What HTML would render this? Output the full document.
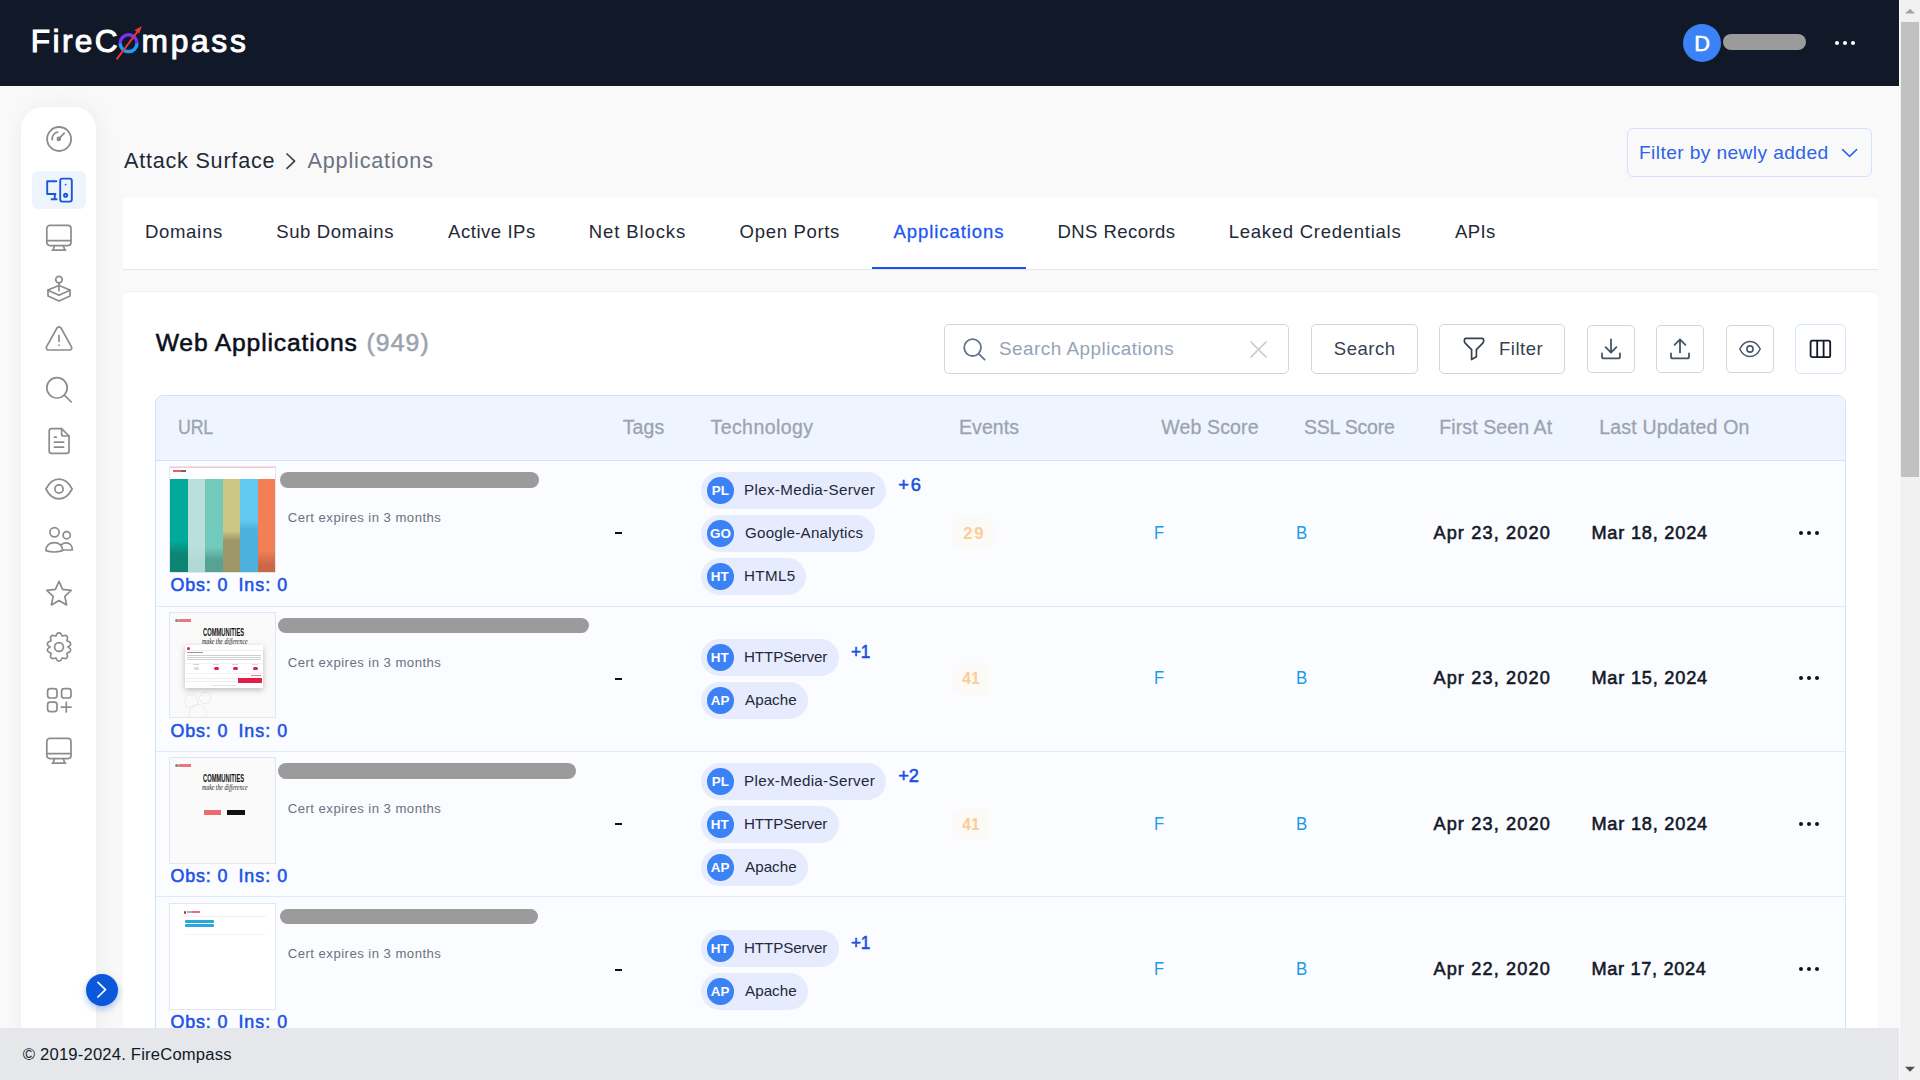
<!DOCTYPE html>
<html><head><meta charset="utf-8"><title>FireCompass - Applications</title>
<style>
html,body{margin:0;padding:0;width:1920px;height:1080px;overflow:hidden;background:#f9f9f9;font-family:"Liberation Sans", sans-serif;}
*{box-sizing:border-box;}
</style></head><body>
<div style="position:absolute;left:0px;top:0px;width:1899px;height:86px;background:#111827"></div>
<svg style="position:absolute;left:110px;top:20px;" width="40" height="45" viewBox="0 0 40 45" fill="none">
<path d="M10.2 23.2 A8.4 8.4 0 0 1 27 23.2" stroke="#7b2ff2" stroke-width="3.5"/>
<path d="M27 23.2 A8.4 8.4 0 0 1 10.2 23.2" stroke="#1e9bff" stroke-width="3.5"/>
<line x1="6.6" y1="39.3" x2="29.5" y2="9" stroke="#e53935" stroke-width="2"/>
<path d="M31.8 6 L24.5 10.2 L29.2 13.6 Z" fill="#e53935"/>
</svg>
<div style="position:absolute;left:1683px;top:24px;width:38px;height:38px;background:#3b82f6;border-radius:50%"></div>
<div style="position:absolute;left:1723px;top:34px;width:83px;height:16px;background:#9b9b9b;border-radius:8px"></div>
<div style="position:absolute;left:1835.25px;top:41px;width:4.1px;height:4.1px;background:#fff;border-radius:50%"></div>
<div style="position:absolute;left:1843.15px;top:41px;width:4.1px;height:4.1px;background:#fff;border-radius:50%"></div>
<div style="position:absolute;left:1850.8500000000001px;top:41px;width:4.1px;height:4.1px;background:#fff;border-radius:50%"></div>
<div style="position:absolute;left:21px;top:107px;width:75px;height:1000px;background:#fff;border-radius:22px 22px 0 0;box-shadow:2px 0 22px rgba(0,0,0,0.055)"></div>
<div style="position:absolute;left:32px;top:171px;width:54px;height:38px;background:#eef4fe;border-radius:6px"></div>
<svg style="position:absolute;left:44px;top:124px;" width="30" height="30" viewBox="0 0 30 30" fill="none"><g stroke="#8c8c8c" stroke-width="1.8" stroke-linecap="round" stroke-linejoin="round"><circle cx="15.1" cy="15" r="12"/><path d="M8.2 15.6 A7 7 0 0 1 13.6 8.2"/><path d="M14.8 14.9 L20.2 9.2"/><circle cx="14.8" cy="14.9" r="1.4" fill="#8c8c8c"/></g></svg>
<svg style="position:absolute;left:44px;top:176px;" width="30" height="28" viewBox="0 0 30 28" fill="none"><g stroke="#1a56db" stroke-width="1.9" stroke-linecap="round" stroke-linejoin="round"><path d="M12.3 5.2 H3.2 V18 H11.5"/><path d="M10.8 18 V23.3 M7.6 23.3 H12.6"/><rect x="16.2" y="2.6" width="11.6" height="23" rx="2"/><circle cx="21.6" cy="8.6" r="0.9" fill="#1a56db" stroke="none"/><circle cx="21.6" cy="19.3" r="1.6"/></g></svg>
<svg style="position:absolute;left:44px;top:223px;" width="30" height="30" viewBox="0 0 30 30" fill="none"><g stroke="#8c8c8c" stroke-width="1.7" stroke-linecap="round" stroke-linejoin="round"><rect x="2.8" y="2.4" width="24.2" height="20.2" rx="3"/><path d="M2.8 17.6 H27"/><path d="M10.5 22.6 L9 27.2 M19.3 22.6 L20.8 27.2 M8.3 27.2 H21.6"/></g></svg>
<svg style="position:absolute;left:44px;top:274px;" width="30" height="30" viewBox="0 0 30 30" fill="none"><g stroke="#8c8c8c" stroke-width="1.7" stroke-linecap="round" stroke-linejoin="round"><circle cx="15" cy="5.6" r="3.3"/><path d="M15 8.9 V16.6"/><path d="M15 11.5 L4 16 V22 L15 27 L26 22 V16 L15 11.5"/><path d="M4 16 L15 21 L26 16 M15 21 V27" stroke-width="0"/><path d="M4 16.2 L15 21.2 L26 16.2"/></g></svg>
<svg style="position:absolute;left:44px;top:324px;" width="30" height="30" viewBox="0 0 30 30" fill="none"><g stroke="#8c8c8c" stroke-width="1.7" stroke-linecap="round" stroke-linejoin="round"><path d="M13 4 L2.6 22.6 C1.8 24.2 2.6 26 4.4 26 H25.6 C27.4 26 28.2 24.2 27.4 22.6 L17 4 C16.1 2.4 13.9 2.4 13 4 Z"/><path d="M15 11.4 V17.3"/><path d="M15 21 V21.2"/></g></svg>
<svg style="position:absolute;left:44px;top:374px;" width="30" height="30" viewBox="0 0 30 30" fill="none"><g stroke="#8c8c8c" stroke-width="1.7" stroke-linecap="round" stroke-linejoin="round"><circle cx="13" cy="13.8" r="10.2"/><path d="M20.6 21.4 L27.3 28"/></g></svg>
<svg style="position:absolute;left:44px;top:426px;" width="30" height="30" viewBox="0 0 30 30" fill="none"><g stroke="#8c8c8c" stroke-width="1.7" stroke-linecap="round" stroke-linejoin="round"><path d="M7.6 2.6 H17.6 L25 10 V25 C25 26.4 24 27.4 22.6 27.4 H7.6 C6.2 27.4 5.2 26.4 5.2 25 V5 C5.2 3.6 6.2 2.6 7.6 2.6 Z"/><path d="M17.6 2.6 V8 C17.6 9.2 18.6 10 19.6 10 H25"/><path d="M10.4 11.2 H12.2 M10.4 16.2 H19.6 M10.4 21.2 H19.6"/></g></svg>
<svg style="position:absolute;left:44px;top:474px;" width="30" height="30" viewBox="0 0 30 30" fill="none"><g stroke="#8c8c8c" stroke-width="1.7" stroke-linecap="round" stroke-linejoin="round"><path d="M1.9 15 C5.2 8.6 9.6 5.1 15 5.1 C20.4 5.1 24.8 8.6 28.1 15 C24.8 21.4 20.4 24.9 15 24.9 C9.6 24.9 5.2 21.4 1.9 15 Z"/><circle cx="15" cy="15" r="4.1"/></g></svg>
<svg style="position:absolute;left:44px;top:524px;" width="30" height="30" viewBox="0 0 30 30" fill="none"><g stroke="#8c8c8c" stroke-width="1.7" stroke-linecap="round" stroke-linejoin="round"><circle cx="10.5" cy="8.3" r="4.6"/><circle cx="22.7" cy="11.2" r="3.6"/><path d="M1.9 26.6 C1.9 21.6 5.6 18.6 10.3 18.6 C15 18.6 18.6 21.6 18.6 26.6 C13 28.4 7.2 28.4 1.9 26.6 Z"/><path d="M17.6 20.6 C18.9 19.4 20.6 18.9 22.3 18.9 C25.8 18.9 28.3 21.6 28.3 26 H18.6"/></g></svg>
<svg style="position:absolute;left:44px;top:578px;" width="30" height="30" viewBox="0 0 30 30" fill="none"><g stroke="#8c8c8c" stroke-width="1.7" stroke-linecap="round" stroke-linejoin="round"><path d="M15 3.4 L18.6 11.4 L27.2 12.4 L20.8 18.3 L22.6 26.9 L15 22.5 L7.4 26.9 L9.2 18.3 L2.8 12.4 L11.4 11.4 Z"/></g></svg>
<svg style="position:absolute;left:44px;top:632px;" width="30" height="30" viewBox="0 0 30 30" fill="none"><g transform="translate(15 15) scale(1.13) translate(-15 -15)" stroke="#8c8c8c" stroke-width="1.5" stroke-linecap="round" stroke-linejoin="round"><path d="M13.2 3.4 C14 2.2 16 2.2 16.8 3.4 L17.8 5.3 L20 4.8 C21.4 4.5 22.8 5.8 22.5 7.2 L22 9.4 L24.3 10.6 C25.6 11.3 25.6 13.3 24.4 14 L22.9 15 L24.4 16 C25.6 16.8 25.6 18.7 24.3 19.4 L22 20.6 L22.5 22.8 C22.8 24.2 21.4 25.5 20 25.2 L17.8 24.7 L16.8 26.6 C16 27.8 14 27.8 13.2 26.6 L12.2 24.7 L10 25.2 C8.6 25.5 7.2 24.2 7.5 22.8 L8 20.6 L5.7 19.4 C4.4 18.7 4.4 16.8 5.6 16 L7.1 15 L5.6 14 C4.4 13.3 4.4 11.3 5.7 10.6 L8 9.4 L7.5 7.2 C7.2 5.8 8.6 4.5 10 4.8 L12.2 5.3 Z"/><circle cx="15" cy="15" r="3.9"/></g></svg>
<svg style="position:absolute;left:44px;top:685px;" width="30" height="30" viewBox="0 0 30 30" fill="none"><g stroke="#8c8c8c" stroke-width="1.7" stroke-linecap="round" stroke-linejoin="round"><rect x="3.6" y="3.6" width="9.4" height="9.4" rx="2.6"/><rect x="17.6" y="3.6" width="9.4" height="9.4" rx="2.6"/><rect x="3.6" y="17.2" width="9.4" height="9.4" rx="2.6"/><path d="M22.3 17.4 V27 M17.4 22.2 H27"/></g></svg>
<svg style="position:absolute;left:44px;top:736px;" width="30" height="30" viewBox="0 0 30 30" fill="none"><g stroke="#8c8c8c" stroke-width="1.7" stroke-linecap="round" stroke-linejoin="round"><rect x="2.8" y="2.4" width="24.2" height="20.2" rx="3"/><path d="M2.8 17.6 H27"/><path d="M10.5 22.6 L9 27.2 M19.3 22.6 L20.8 27.2 M8.3 27.2 H21.6"/></g></svg>
<div style="position:absolute;left:86px;top:974px;width:32px;height:32px;background:#0b58db;border-radius:50%;box-shadow:0 3px 7px rgba(11,87,208,0.35)"></div>
<svg style="position:absolute;left:86px;top:974px;" width="32" height="32" viewBox="0 0 32 32" fill="none"><path d="M11.9 8.3 L19.5 15.7 L11.9 23" stroke="#fff" stroke-width="1.7" stroke-linecap="round" stroke-linejoin="round"/></svg>
<svg style="position:absolute;left:282px;top:150px;" width="18" height="22" viewBox="0 0 18 22" fill="none"><path d="M5 4 L12.6 11.2 L5 18.4" stroke="#374151" stroke-width="1.7" stroke-linecap="round" stroke-linejoin="round"/></svg>
<div style="position:absolute;left:1627px;top:128px;width:245px;height:49px;border:1px solid #d3e3fd;border-radius:6px;background:transparent"></div>
<svg style="position:absolute;left:1838px;top:144px;" width="24" height="18" viewBox="0 0 24 18" fill="none"><path d="M4.6 5.6 L11.6 12.4 L18.6 5.6" stroke="#2f64e8" stroke-width="1.5" stroke-linecap="round" stroke-linejoin="round"/></svg>
<div style="position:absolute;left:123px;top:198px;width:1755px;height:72px;background:#fff;border-bottom:1px solid #e5e7eb"></div>
<div style="position:absolute;left:872px;top:267px;width:154px;height:2px;background:#1654f0"></div>
<div style="position:absolute;left:123px;top:292px;width:1755px;height:820px;background:#fff;border-radius:6px;box-shadow:0 -1px 0 #f1f1f3"></div>
<div style="position:absolute;left:944px;top:324px;width:345px;height:50px;border:1px solid #d1d5db;border-radius:5px;background:#fff"></div>
<svg style="position:absolute;left:960px;top:335px;" width="30" height="30" viewBox="0 0 30 30" fill="none"><circle cx="12.6" cy="12.6" r="8.4" stroke="#64748b" stroke-width="1.8"/><path d="M18.8 18.8 L24.6 24.6" stroke="#64748b" stroke-width="1.8" stroke-linecap="round"/></svg>
<svg style="position:absolute;left:1248px;top:339px;" width="21" height="21" viewBox="0 0 21 21" fill="none"><path d="M3 3 L18 18 M18 3 L3 18" stroke="#c8c8c8" stroke-width="1.6" stroke-linecap="round"/></svg>
<div style="position:absolute;left:1311px;top:324px;width:107px;height:50px;border:1px solid #d1d5db;border-radius:5px;background:#fff"></div>
<div style="position:absolute;left:1439px;top:324px;width:126px;height:50px;border:1px solid #d1d5db;border-radius:5px;background:#fff"></div>
<svg style="position:absolute;left:1460px;top:335px;" width="28" height="28" viewBox="0 0 28 28" fill="none"><path d="M4.4 4.8 C4.4 3.9 5.2 3.4 6 3.4 H22 C22.8 3.4 23.6 3.9 23.6 4.8 V6.3 C23.6 7 23.3 7.6 22.8 8.1 L16.4 14.6 V21.8 L11.6 24.6 V14.6 L5.2 8.1 C4.7 7.6 4.4 7 4.4 6.3 Z" stroke="#374151" stroke-width="1.7" stroke-linejoin="round"/></svg>
<div style="position:absolute;left:1587px;top:325px;width:48px;height:48px;border:1px solid #d1d5db;border-radius:5px;background:#fff"></div>
<div style="position:absolute;left:1656px;top:325px;width:48px;height:48px;border:1px solid #d1d5db;border-radius:5px;background:#fff"></div>
<div style="position:absolute;left:1726px;top:325px;width:48px;height:48px;border:1px solid #d1d5db;border-radius:5px;background:#fff"></div>
<svg style="position:absolute;left:1599px;top:337px;" width="24" height="24" viewBox="0 0 24 24" fill="none"><path d="M12 2.4 V15.4 M6.6 10.2 L12 15.6 L17.4 10.2 M3 16.4 V19.4 C3 20.6 3.8 21.4 5 21.4 H19 C20.2 21.4 21 20.6 21 19.4 V16.4" stroke="#475569" stroke-width="1.8" stroke-linecap="round" stroke-linejoin="round"/></svg>
<svg style="position:absolute;left:1668px;top:337px;" width="24" height="24" viewBox="0 0 24 24" fill="none"><path d="M12 15.4 V2.6 M6.6 7.8 L12 2.4 L17.4 7.8 M3 16.4 V19.4 C3 20.6 3.8 21.4 5 21.4 H19 C20.2 21.4 21 20.6 21 19.4 V16.4" stroke="#475569" stroke-width="1.8" stroke-linecap="round" stroke-linejoin="round"/></svg>
<svg style="position:absolute;left:1738px;top:337px;" width="24" height="24" viewBox="0 0 24 24" fill="none"><path d="M1.8 12 C3.9 7.5 7.5 4.4 12 4.4 C16.5 4.4 20.1 7.5 22.2 12 C20.1 16.5 16.5 19.6 12 19.6 C7.5 19.6 3.9 16.5 1.8 12 Z" stroke="#475569" stroke-width="1.5"/><circle cx="12" cy="12" r="3.1" stroke="#475569" stroke-width="1.6"/></svg>
<div style="position:absolute;left:1795px;top:324px;width:51px;height:50px;border:1px solid #d6e6fd;border-radius:6px;background:#fff"></div>
<svg style="position:absolute;left:1808px;top:337px;" width="24" height="24" viewBox="0 0 24 24" fill="none"><rect x="2.6" y="3.6" width="19.6" height="16.6" rx="1.8" stroke="#111827" stroke-width="1.8"/><path d="M9.2 3.6 V20.2 M15.6 3.6 V20.2" stroke="#111827" stroke-width="1.8"/></svg>
<div style="position:absolute;left:155px;top:395px;width:1691px;height:720px;background:#fafcff;border:1px solid #cfe1fd;border-radius:8px 8px 0 0"></div>
<div style="position:absolute;left:156px;top:396px;width:1689px;height:64px;background:#eef5fe;border-radius:7px 7px 0 0"></div>
<div style="position:absolute;left:156px;top:460px;width:1689px;height:1px;background:#cfe1fd"></div>
<div style="position:absolute;left:156px;top:606px;width:1689px;height:1px;background:#dde9fd"></div>
<div style="position:absolute;left:156px;top:751px;width:1689px;height:1px;background:#dde9fd"></div>
<div style="position:absolute;left:156px;top:896px;width:1689px;height:1px;background:#dde9fd"></div>
<div style="position:absolute;left:169px;top:466.3px;width:107px;height:106.5px;background:#fff;border:1px solid #e3e6ee;overflow:hidden"><div style="position:absolute;left:0;top:0;width:105px;height:12px;background:#fff;border-top:1px solid #f7c6cc"><div style="position:absolute;left:2.5px;top:2.2px;width:8px;height:1.6px;background:#e8344a;opacity:.8"></div><div style="position:absolute;left:10.5px;top:2.2px;width:5px;height:1.6px;background:#444;opacity:.8"></div></div><div style="position:absolute;left:0.00px;top:12px;width:17.80px;height:93.5px;background:linear-gradient(180deg,#00a99a 0%,#00a99a 66%,#0c8575 80%,#0c8575 100%)"></div><div style="position:absolute;left:17.50px;top:12px;width:17.80px;height:93.5px;background:linear-gradient(180deg,#b9e0dd 0%,#b9e0dd 70%,#b0d8d4 90%,#b0d8d4 100%)"></div><div style="position:absolute;left:35.00px;top:12px;width:17.80px;height:93.5px;background:linear-gradient(180deg,#72cabd 0%,#72cabd 72%,#55a394 86%,#55a394 100%)"></div><div style="position:absolute;left:52.50px;top:12px;width:17.80px;height:93.5px;background:linear-gradient(180deg,#cdc786 0%,#cdc786 55%,#9c9668 66%,#9c9668 100%)"></div><div style="position:absolute;left:70.00px;top:12px;width:17.80px;height:93.5px;background:linear-gradient(180deg,#62c9f3 0%,#62c9f3 44%,#4eb0dc 54%,#4eb0dc 100%)"></div><div style="position:absolute;left:87.50px;top:12px;width:17.80px;height:93.5px;background:linear-gradient(180deg,#f37f56 0%,#f37f56 76%,#c96846 92%,#c96846 100%)"></div></div>
<div style="position:absolute;left:280px;top:472.0px;width:259px;height:15.5px;background:#9b9b9b;border-radius:8px"></div>
<div style="position:absolute;left:615px;top:532.0px;width:6.6px;height:2px;background:#111"></div>
<div style="position:absolute;left:701px;top:472.0px;width:185.04999999999995px;height:37px;background:#e6ebfd;border-radius:18.5px"></div>
<div style="position:absolute;left:707px;top:477.2px;width:26.5px;height:26.5px;background:#3b82f6;border-radius:50%"></div>
<div style="position:absolute;left:701px;top:515.0px;width:173.79999999999995px;height:37px;background:#e6ebfd;border-radius:18.5px"></div>
<div style="position:absolute;left:707px;top:520.2px;width:26.5px;height:26.5px;background:#3b82f6;border-radius:50%"></div>
<div style="position:absolute;left:701px;top:558.0px;width:105.0px;height:37px;background:#e6ebfd;border-radius:18.5px"></div>
<div style="position:absolute;left:707px;top:563.2px;width:26.5px;height:26.5px;background:#3b82f6;border-radius:50%"></div>
<div style="position:absolute;left:952.3px;top:517.5px;width:42px;height:31.5px;background:#fcfaf7;border-radius:9px"></div>
<div style="position:absolute;left:1798.8px;top:530.6999999999999px;width:4.2px;height:4.2px;background:#111;border-radius:50%"></div>
<div style="position:absolute;left:1806.95px;top:530.6999999999999px;width:4.2px;height:4.2px;background:#111;border-radius:50%"></div>
<div style="position:absolute;left:1815.1px;top:530.6999999999999px;width:4.2px;height:4.2px;background:#111;border-radius:50%"></div>
<div style="position:absolute;left:169px;top:611.8px;width:107px;height:106.5px;background:#fafafa;border:1px solid #e3e6ee;overflow:hidden"><div style="position:absolute;left:5px;top:6px;width:4px;height:3px;background:#555;border-radius:50%;opacity:.7"></div><div style="position:absolute;left:9px;top:6px;width:12px;height:3px;background:#e8485a;opacity:.75"></div><div style="position:absolute;left:32.5px;top:14.5px;width:43px;height:11px;overflow:visible"><span style="position:absolute;left:0;top:0;font-family:Liberation Sans;font-weight:700;font-size:11.8px;line-height:11px;color:#111;white-space:nowrap;transform-origin:0 0;transform:scaleX(0.49)">COMMUNITIES</span></div><div style="position:absolute;left:32px;top:25.5px;width:44px;height:7px"><span style="position:absolute;left:0;top:0;font-family:Liberation Serif;font-style:italic;font-size:7.5px;line-height:7px;color:#222;white-space:nowrap;transform-origin:0 0;transform:scaleX(0.78)">make the difference</span></div><div style="position:absolute;left:8px;top:76px;width:44px;height:30px;opacity:.35;background:radial-gradient(circle at 30% 40%,transparent 6px,#ccc 6.5px,transparent 7.5px),radial-gradient(circle at 62% 30%,transparent 5px,#ccc 5.5px,transparent 6.5px),radial-gradient(circle at 45% 80%,transparent 8px,#ccc 8.5px,transparent 9.5px)"></div><div style="position:absolute;left:15px;top:32px;width:78px;height:43px;background:#fff;box-shadow:0 2px 6px rgba(0,0,0,0.25)"><div style="position:absolute;left:2px;top:2px;width:3px;height:3px;background:#e11d48;border-radius:50%"></div><div style="position:absolute;left:0;top:5px;width:78px;height:1px;background:#f0f0f0"></div><div style="position:absolute;left:2px;top:7.5px;width:16px;height:1px;background:#999"></div><div style="position:absolute;left:2px;top:10px;width:74px;height:5px;background:repeating-linear-gradient(180deg,#aaa 0 1px,transparent 1px 2px);opacity:.55"></div><div style="position:absolute;left:0;top:18px;width:78px;height:1px;background:#f2f2f2"></div><div style="position:absolute;left:8.0px;top:19.5px;width:6px;height:1px;background:#bbb;opacity:.6"></div><div style="position:absolute;left:9.0px;top:22.5px;width:5px;height:3px;background:#ddd;border-radius:2px"></div><div style="position:absolute;left:27.5px;top:19.5px;width:6px;height:1px;background:#bbb;opacity:.6"></div><div style="position:absolute;left:28.5px;top:22.5px;width:5px;height:3px;background:#e11d48;border-radius:2px"></div><div style="position:absolute;left:47.0px;top:19.5px;width:6px;height:1px;background:#bbb;opacity:.6"></div><div style="position:absolute;left:48.0px;top:22.5px;width:5px;height:3px;background:#e11d48;border-radius:2px"></div><div style="position:absolute;left:66.5px;top:19.5px;width:6px;height:1px;background:#bbb;opacity:.6"></div><div style="position:absolute;left:67.5px;top:22.5px;width:5px;height:3px;background:#e11d48;border-radius:2px"></div><div style="position:absolute;left:0;top:28.5px;width:78px;height:1px;background:#f2f2f2"></div><div style="position:absolute;left:66px;top:30.5px;width:10px;height:1px;background:#e11d48;opacity:.6"></div><div style="position:absolute;left:1px;top:33.5px;width:25px;height:4px;border:1px solid #eee"></div><div style="position:absolute;left:27px;top:33.5px;width:25px;height:4px;border:1px solid #eee"></div><div style="position:absolute;left:53px;top:33.5px;width:24px;height:4.5px;background:#e11d48"></div><div style="position:absolute;left:27px;top:40px;width:24px;height:1px;background:#ccc;opacity:.6"></div></div></div>
<div style="position:absolute;left:278px;top:617.5px;width:311px;height:15.5px;background:#9b9b9b;border-radius:8px"></div>
<div style="position:absolute;left:615px;top:677.5px;width:6.6px;height:2px;background:#111"></div>
<div style="position:absolute;left:701px;top:639.0px;width:137.5999999999999px;height:37px;background:#e6ebfd;border-radius:18.5px"></div>
<div style="position:absolute;left:707px;top:644.2px;width:26.5px;height:26.5px;background:#3b82f6;border-radius:50%"></div>
<div style="position:absolute;left:701px;top:682.0px;width:106.5px;height:37px;background:#e6ebfd;border-radius:18.5px"></div>
<div style="position:absolute;left:707px;top:687.2px;width:26.5px;height:26.5px;background:#3b82f6;border-radius:50%"></div>
<div style="position:absolute;left:952.3px;top:663.0px;width:37.5px;height:31.5px;background:#fcfaf7;border-radius:9px"></div>
<div style="position:absolute;left:1798.8px;top:676.1999999999999px;width:4.2px;height:4.2px;background:#111;border-radius:50%"></div>
<div style="position:absolute;left:1806.95px;top:676.1999999999999px;width:4.2px;height:4.2px;background:#111;border-radius:50%"></div>
<div style="position:absolute;left:1815.1px;top:676.1999999999999px;width:4.2px;height:4.2px;background:#111;border-radius:50%"></div>
<div style="position:absolute;left:169px;top:757.3px;width:107px;height:106.5px;background:#fafafa;border:1px solid #e3e6ee;overflow:hidden"><div style="position:absolute;left:5px;top:6px;width:4px;height:3px;background:#555;border-radius:50%;opacity:.7"></div><div style="position:absolute;left:9px;top:6px;width:12px;height:3px;background:#e8485a;opacity:.75"></div><div style="position:absolute;left:32.5px;top:14.5px;width:43px;height:11px;overflow:visible"><span style="position:absolute;left:0;top:0;font-family:Liberation Sans;font-weight:700;font-size:11.8px;line-height:11px;color:#111;white-space:nowrap;transform-origin:0 0;transform:scaleX(0.49)">COMMUNITIES</span></div><div style="position:absolute;left:32px;top:25.5px;width:44px;height:7px"><span style="position:absolute;left:0;top:0;font-family:Liberation Serif;font-style:italic;font-size:7.5px;line-height:7px;color:#222;white-space:nowrap;transform-origin:0 0;transform:scaleX(0.78)">make the difference</span></div><div style="position:absolute;left:34px;top:52px;width:17px;height:5px;background:#ee6a72"></div><div style="position:absolute;left:57px;top:52px;width:18px;height:5px;background:#111"></div></div>
<div style="position:absolute;left:278px;top:763.0px;width:298px;height:15.5px;background:#9b9b9b;border-radius:8px"></div>
<div style="position:absolute;left:615px;top:823.0px;width:6.6px;height:2px;background:#111"></div>
<div style="position:absolute;left:701px;top:763.0px;width:185.04999999999995px;height:37px;background:#e6ebfd;border-radius:18.5px"></div>
<div style="position:absolute;left:707px;top:768.2px;width:26.5px;height:26.5px;background:#3b82f6;border-radius:50%"></div>
<div style="position:absolute;left:701px;top:806.0px;width:137.5999999999999px;height:37px;background:#e6ebfd;border-radius:18.5px"></div>
<div style="position:absolute;left:707px;top:811.2px;width:26.5px;height:26.5px;background:#3b82f6;border-radius:50%"></div>
<div style="position:absolute;left:701px;top:849.0px;width:106.5px;height:37px;background:#e6ebfd;border-radius:18.5px"></div>
<div style="position:absolute;left:707px;top:854.2px;width:26.5px;height:26.5px;background:#3b82f6;border-radius:50%"></div>
<div style="position:absolute;left:952.3px;top:808.5px;width:37.5px;height:31.5px;background:#fcfaf7;border-radius:9px"></div>
<div style="position:absolute;left:1798.8px;top:821.6999999999999px;width:4.2px;height:4.2px;background:#111;border-radius:50%"></div>
<div style="position:absolute;left:1806.95px;top:821.6999999999999px;width:4.2px;height:4.2px;background:#111;border-radius:50%"></div>
<div style="position:absolute;left:1815.1px;top:821.6999999999999px;width:4.2px;height:4.2px;background:#111;border-radius:50%"></div>
<div style="position:absolute;left:169px;top:903.3px;width:107px;height:106.5px;background:#fff;border:1px solid #e3e6ee;overflow:hidden"><div style="position:absolute;left:13.5px;top:6.8px;width:2.6px;height:2.6px;background:#b8283a;border-radius:50%"></div><div style="position:absolute;left:16.6px;top:7px;width:5px;height:2.2px;background:#666;opacity:.55"></div><div style="position:absolute;left:21.8px;top:7px;width:8px;height:2.2px;background:#e8485a;opacity:.8"></div><div style="position:absolute;left:12px;top:11.6px;width:84px;height:1px;background:#f0f0f0"></div><div style="position:absolute;left:15px;top:16.2px;width:29px;height:2.6px;background:#2aa7de;border-radius:1px"></div><div style="position:absolute;left:15px;top:20.2px;width:29px;height:2.6px;background:#2aa7de;border-radius:1px"></div><div style="position:absolute;left:15px;top:29.5px;width:80px;height:1px;background:#f3f3f3"></div></div>
<div style="position:absolute;left:280px;top:908.5px;width:258px;height:15.5px;background:#9b9b9b;border-radius:8px"></div>
<div style="position:absolute;left:615px;top:968.5px;width:6.6px;height:2px;background:#111"></div>
<div style="position:absolute;left:701px;top:930.0px;width:137.5999999999999px;height:37px;background:#e6ebfd;border-radius:18.5px"></div>
<div style="position:absolute;left:707px;top:935.2px;width:26.5px;height:26.5px;background:#3b82f6;border-radius:50%"></div>
<div style="position:absolute;left:701px;top:973.0px;width:106.5px;height:37px;background:#e6ebfd;border-radius:18.5px"></div>
<div style="position:absolute;left:707px;top:978.2px;width:26.5px;height:26.5px;background:#3b82f6;border-radius:50%"></div>
<div style="position:absolute;left:1798.8px;top:967.1999999999999px;width:4.2px;height:4.2px;background:#111;border-radius:50%"></div>
<div style="position:absolute;left:1806.95px;top:967.1999999999999px;width:4.2px;height:4.2px;background:#111;border-radius:50%"></div>
<div style="position:absolute;left:1815.1px;top:967.1999999999999px;width:4.2px;height:4.2px;background:#111;border-radius:50%"></div>
<div style="position:absolute;left:30.80px;top:25.50px;font-size:31.71px;line-height:31.71px;font-weight:400;color:#ffffff;letter-spacing:2.350px;white-space:nowrap;-webkit-text-stroke:1px #fff;">FireC</div>
<div style="position:absolute;left:141.50px;top:25.50px;font-size:31.71px;line-height:31.71px;font-weight:400;color:#ffffff;letter-spacing:2.719px;white-space:nowrap;-webkit-text-stroke:1px #fff;">mpass</div>
<div style="position:absolute;left:1694.20px;top:32.90px;font-size:21.81px;line-height:21.81px;font-weight:400;color:#ffffff;letter-spacing:0.000px;white-space:nowrap;-webkit-text-stroke:0.55px #ffffff;">D</div>
<div style="position:absolute;left:124.00px;top:150.00px;font-size:21.62px;line-height:21.62px;font-weight:400;color:#1f2937;letter-spacing:0.769px;white-space:nowrap;">Attack Surface</div>
<div style="position:absolute;left:307.50px;top:150.00px;font-size:21.62px;line-height:21.62px;font-weight:400;color:#6b7280;letter-spacing:0.817px;white-space:nowrap;">Applications</div>
<div style="position:absolute;left:1639.00px;top:142.75px;font-size:19.22px;line-height:19.22px;font-weight:400;color:#2f64e8;letter-spacing:0.386px;white-space:nowrap;">Filter by newly added</div>
<div style="position:absolute;left:144.90px;top:222.80px;font-size:18.55px;line-height:18.55px;font-weight:400;color:#1f2937;letter-spacing:0.691px;white-space:nowrap;">Domains</div>
<div style="position:absolute;left:276.20px;top:222.80px;font-size:18.55px;line-height:18.55px;font-weight:400;color:#1f2937;letter-spacing:0.602px;white-space:nowrap;">Sub Domains</div>
<div style="position:absolute;left:448.00px;top:222.80px;font-size:18.55px;line-height:18.55px;font-weight:400;color:#1f2937;letter-spacing:0.542px;white-space:nowrap;">Active IPs</div>
<div style="position:absolute;left:588.70px;top:222.80px;font-size:18.55px;line-height:18.55px;font-weight:400;color:#1f2937;letter-spacing:0.889px;white-space:nowrap;">Net Blocks</div>
<div style="position:absolute;left:739.60px;top:222.80px;font-size:18.55px;line-height:18.55px;font-weight:400;color:#1f2937;letter-spacing:0.670px;white-space:nowrap;">Open Ports</div>
<div style="position:absolute;left:893.50px;top:222.80px;font-size:18.55px;line-height:18.55px;font-weight:400;color:#1a56f0;letter-spacing:0.915px;white-space:nowrap;-webkit-text-stroke:0.28px #1a56f0;">Applications</div>
<div style="position:absolute;left:1057.50px;top:222.80px;font-size:18.55px;line-height:18.55px;font-weight:400;color:#1f2937;letter-spacing:0.419px;white-space:nowrap;">DNS Records</div>
<div style="position:absolute;left:1228.80px;top:222.80px;font-size:18.55px;line-height:18.55px;font-weight:400;color:#1f2937;letter-spacing:0.717px;white-space:nowrap;">Leaked Credentials</div>
<div style="position:absolute;left:1455.00px;top:222.80px;font-size:18.55px;line-height:18.55px;font-weight:400;color:#1f2937;letter-spacing:0.377px;white-space:nowrap;">APIs</div>
<div style="position:absolute;left:155.70px;top:331.00px;font-size:24.7px;line-height:24.7px;font-weight:400;color:#0b0f19;letter-spacing:0.820px;white-space:nowrap;-webkit-text-stroke:0.55px #0b0f19;">Web Applications</div>
<div style="position:absolute;left:366.50px;top:331.00px;font-size:24.7px;line-height:24.7px;font-weight:400;color:#9ca3af;letter-spacing:1.135px;white-space:nowrap;-webkit-text-stroke:0.55px #9ca3af;">(949)</div>
<div style="position:absolute;left:999.00px;top:340.30px;font-size:18.84px;line-height:18.84px;font-weight:400;color:#94a3b8;letter-spacing:0.517px;white-space:nowrap;">Search Applications</div>
<div style="position:absolute;left:1333.80px;top:340.30px;font-size:18.55px;line-height:18.55px;font-weight:400;color:#374151;letter-spacing:0.518px;white-space:nowrap;">Search</div>
<div style="position:absolute;left:1499.00px;top:339.70px;font-size:18.55px;line-height:18.55px;font-weight:400;color:#374151;letter-spacing:0.518px;white-space:nowrap;">Filter</div>
<div style="position:absolute;left:177.90px;top:418.20px;font-size:19.51px;line-height:19.51px;font-weight:400;color:#9ca3af;letter-spacing:-0.300px;white-space:nowrap;-webkit-text-stroke:0.28px #9ca3af;transform:scaleX(0.9110);transform-origin:1.00px 0;">URL</div>
<div style="position:absolute;left:622.70px;top:418.20px;font-size:19.51px;line-height:19.51px;font-weight:400;color:#9ca3af;letter-spacing:0.127px;white-space:nowrap;-webkit-text-stroke:0.28px #9ca3af;">Tags</div>
<div style="position:absolute;left:710.50px;top:418.20px;font-size:19.51px;line-height:19.51px;font-weight:400;color:#9ca3af;letter-spacing:0.424px;white-space:nowrap;-webkit-text-stroke:0.28px #9ca3af;">Technology</div>
<div style="position:absolute;left:959.00px;top:418.20px;font-size:19.51px;line-height:19.51px;font-weight:400;color:#9ca3af;letter-spacing:0.091px;white-space:nowrap;-webkit-text-stroke:0.28px #9ca3af;">Events</div>
<div style="position:absolute;left:1161.30px;top:418.20px;font-size:19.51px;line-height:19.51px;font-weight:400;color:#9ca3af;letter-spacing:0.146px;white-space:nowrap;-webkit-text-stroke:0.28px #9ca3af;">Web Score</div>
<div style="position:absolute;left:1304.00px;top:418.20px;font-size:19.51px;line-height:19.51px;font-weight:400;color:#9ca3af;letter-spacing:-0.206px;white-space:nowrap;-webkit-text-stroke:0.28px #9ca3af;">SSL Score</div>
<div style="position:absolute;left:1439.30px;top:418.20px;font-size:19.51px;line-height:19.51px;font-weight:400;color:#9ca3af;letter-spacing:0.094px;white-space:nowrap;-webkit-text-stroke:0.28px #9ca3af;">First Seen At</div>
<div style="position:absolute;left:1599.30px;top:418.20px;font-size:19.51px;line-height:19.51px;font-weight:400;color:#9ca3af;letter-spacing:0.188px;white-space:nowrap;-webkit-text-stroke:0.28px #9ca3af;">Last Updated On</div>
<div style="position:absolute;left:287.80px;top:510.90px;font-size:13.17px;line-height:13.17px;font-weight:400;color:#6b7280;letter-spacing:0.456px;white-space:nowrap;">Cert expires in 3 months</div>
<div style="position:absolute;left:170.60px;top:577.40px;font-size:17.87px;line-height:17.87px;font-weight:400;color:#2152e4;letter-spacing:0.834px;white-space:nowrap;-webkit-text-stroke:0.55px #2152e4;">Obs: 0</div>
<div style="position:absolute;left:238.40px;top:577.40px;font-size:17.87px;line-height:17.87px;font-weight:400;color:#2152e4;letter-spacing:1.020px;white-space:nowrap;-webkit-text-stroke:0.55px #2152e4;">Ins: 0</div>
<div style="position:absolute;left:711.72px;top:484.20px;font-size:13.45px;line-height:13.45px;font-weight:700;color:#ffffff;letter-spacing:0.000px;white-space:nowrap;">PL</div>
<div style="position:absolute;left:744.00px;top:482.10px;font-size:15.18px;line-height:15.18px;font-weight:400;color:#1f2937;letter-spacing:0.323px;white-space:nowrap;">Plex-Media-Server</div>
<div style="position:absolute;left:709.97px;top:527.20px;font-size:13.45px;line-height:13.45px;font-weight:700;color:#ffffff;letter-spacing:0.000px;white-space:nowrap;">GO</div>
<div style="position:absolute;left:745.00px;top:525.10px;font-size:15.18px;line-height:15.18px;font-weight:400;color:#1f2937;letter-spacing:0.227px;white-space:nowrap;">Google-Analytics</div>
<div style="position:absolute;left:710.85px;top:570.20px;font-size:13.45px;line-height:13.45px;font-weight:700;color:#ffffff;letter-spacing:0.000px;white-space:nowrap;">HT</div>
<div style="position:absolute;left:744.00px;top:568.10px;font-size:15.18px;line-height:15.18px;font-weight:400;color:#1f2937;letter-spacing:0.350px;white-space:nowrap;">HTML5</div>
<div style="position:absolute;left:898.25px;top:475.60px;font-size:18.26px;line-height:18.26px;font-weight:400;color:#1a50e0;letter-spacing:1.792px;white-space:nowrap;-webkit-text-stroke:0.55px #1a50e0;">+6</div>
<div style="position:absolute;left:963.30px;top:525.90px;font-size:16.72px;line-height:16.72px;font-weight:700;color:#fdcc98;letter-spacing:1.711px;white-space:nowrap;">29</div>
<div style="position:absolute;left:1153.80px;top:522.90px;font-size:19.22px;line-height:19.22px;font-weight:400;color:#1a9be8;letter-spacing:0.000px;white-space:nowrap;transform:scaleX(0.86);transform-origin:0 0;">F</div>
<div style="position:absolute;left:1296.30px;top:522.90px;font-size:19.22px;line-height:19.22px;font-weight:400;color:#1a9be8;letter-spacing:0.000px;white-space:nowrap;transform:scaleX(0.88);transform-origin:0 0;">B</div>
<div style="position:absolute;left:1433.40px;top:523.80px;font-size:18.16px;line-height:18.16px;font-weight:400;color:#111827;letter-spacing:1.125px;white-space:nowrap;-webkit-text-stroke:0.55px #111827;">Apr 23, 2020</div>
<div style="position:absolute;left:1591.40px;top:523.80px;font-size:18.16px;line-height:18.16px;font-weight:400;color:#111827;letter-spacing:0.796px;white-space:nowrap;-webkit-text-stroke:0.55px #111827;">Mar 18, 2024</div>
<div style="position:absolute;left:287.80px;top:656.40px;font-size:13.17px;line-height:13.17px;font-weight:400;color:#6b7280;letter-spacing:0.456px;white-space:nowrap;">Cert expires in 3 months</div>
<div style="position:absolute;left:170.60px;top:722.90px;font-size:17.87px;line-height:17.87px;font-weight:400;color:#2152e4;letter-spacing:0.834px;white-space:nowrap;-webkit-text-stroke:0.55px #2152e4;">Obs: 0</div>
<div style="position:absolute;left:238.40px;top:722.90px;font-size:17.87px;line-height:17.87px;font-weight:400;color:#2152e4;letter-spacing:1.020px;white-space:nowrap;-webkit-text-stroke:0.55px #2152e4;">Ins: 0</div>
<div style="position:absolute;left:710.85px;top:651.20px;font-size:13.45px;line-height:13.45px;font-weight:700;color:#ffffff;letter-spacing:0.000px;white-space:nowrap;">HT</div>
<div style="position:absolute;left:744.00px;top:649.10px;font-size:15.18px;line-height:15.18px;font-weight:400;color:#1f2937;letter-spacing:-0.105px;white-space:nowrap;">HTTPServer</div>
<div style="position:absolute;left:710.85px;top:694.20px;font-size:13.45px;line-height:13.45px;font-weight:700;color:#ffffff;letter-spacing:0.000px;white-space:nowrap;">AP</div>
<div style="position:absolute;left:745.00px;top:692.10px;font-size:15.18px;line-height:15.18px;font-weight:400;color:#1f2937;letter-spacing:0.036px;white-space:nowrap;">Apache</div>
<div style="position:absolute;left:850.80px;top:642.60px;font-size:18.26px;line-height:18.26px;font-weight:400;color:#1a50e0;letter-spacing:-0.300px;white-space:nowrap;-webkit-text-stroke:0.55px #1a50e0;transform:scaleX(0.9407);transform-origin:0.00px 0;">+1</div>
<div style="position:absolute;left:962.17px;top:671.40px;font-size:15.76px;line-height:15.76px;font-weight:700;color:#fdcc98;letter-spacing:0.000px;white-space:nowrap;">41</div>
<div style="position:absolute;left:1153.80px;top:668.40px;font-size:19.22px;line-height:19.22px;font-weight:400;color:#1a9be8;letter-spacing:0.000px;white-space:nowrap;transform:scaleX(0.86);transform-origin:0 0;">F</div>
<div style="position:absolute;left:1296.30px;top:668.40px;font-size:19.22px;line-height:19.22px;font-weight:400;color:#1a9be8;letter-spacing:0.000px;white-space:nowrap;transform:scaleX(0.88);transform-origin:0 0;">B</div>
<div style="position:absolute;left:1433.40px;top:669.30px;font-size:18.16px;line-height:18.16px;font-weight:400;color:#111827;letter-spacing:1.125px;white-space:nowrap;-webkit-text-stroke:0.55px #111827;">Apr 23, 2020</div>
<div style="position:absolute;left:1591.40px;top:669.30px;font-size:18.16px;line-height:18.16px;font-weight:400;color:#111827;letter-spacing:0.796px;white-space:nowrap;-webkit-text-stroke:0.55px #111827;">Mar 15, 2024</div>
<div style="position:absolute;left:287.80px;top:801.90px;font-size:13.17px;line-height:13.17px;font-weight:400;color:#6b7280;letter-spacing:0.456px;white-space:nowrap;">Cert expires in 3 months</div>
<div style="position:absolute;left:170.60px;top:868.40px;font-size:17.87px;line-height:17.87px;font-weight:400;color:#2152e4;letter-spacing:0.834px;white-space:nowrap;-webkit-text-stroke:0.55px #2152e4;">Obs: 0</div>
<div style="position:absolute;left:238.40px;top:868.40px;font-size:17.87px;line-height:17.87px;font-weight:400;color:#2152e4;letter-spacing:1.020px;white-space:nowrap;-webkit-text-stroke:0.55px #2152e4;">Ins: 0</div>
<div style="position:absolute;left:711.72px;top:775.20px;font-size:13.45px;line-height:13.45px;font-weight:700;color:#ffffff;letter-spacing:0.000px;white-space:nowrap;">PL</div>
<div style="position:absolute;left:744.00px;top:773.10px;font-size:15.18px;line-height:15.18px;font-weight:400;color:#1f2937;letter-spacing:0.323px;white-space:nowrap;">Plex-Media-Server</div>
<div style="position:absolute;left:710.85px;top:818.20px;font-size:13.45px;line-height:13.45px;font-weight:700;color:#ffffff;letter-spacing:0.000px;white-space:nowrap;">HT</div>
<div style="position:absolute;left:744.00px;top:816.10px;font-size:15.18px;line-height:15.18px;font-weight:400;color:#1f2937;letter-spacing:-0.105px;white-space:nowrap;">HTTPServer</div>
<div style="position:absolute;left:710.85px;top:861.20px;font-size:13.45px;line-height:13.45px;font-weight:700;color:#ffffff;letter-spacing:0.000px;white-space:nowrap;">AP</div>
<div style="position:absolute;left:745.00px;top:859.10px;font-size:15.18px;line-height:15.18px;font-weight:400;color:#1f2937;letter-spacing:0.036px;white-space:nowrap;">Apache</div>
<div style="position:absolute;left:898.25px;top:766.60px;font-size:18.26px;line-height:18.26px;font-weight:400;color:#1a50e0;letter-spacing:-0.208px;white-space:nowrap;-webkit-text-stroke:0.55px #1a50e0;">+2</div>
<div style="position:absolute;left:962.17px;top:816.90px;font-size:15.76px;line-height:15.76px;font-weight:700;color:#fdcc98;letter-spacing:0.000px;white-space:nowrap;">41</div>
<div style="position:absolute;left:1153.80px;top:813.90px;font-size:19.22px;line-height:19.22px;font-weight:400;color:#1a9be8;letter-spacing:0.000px;white-space:nowrap;transform:scaleX(0.86);transform-origin:0 0;">F</div>
<div style="position:absolute;left:1296.30px;top:813.90px;font-size:19.22px;line-height:19.22px;font-weight:400;color:#1a9be8;letter-spacing:0.000px;white-space:nowrap;transform:scaleX(0.88);transform-origin:0 0;">B</div>
<div style="position:absolute;left:1433.40px;top:814.80px;font-size:18.16px;line-height:18.16px;font-weight:400;color:#111827;letter-spacing:1.125px;white-space:nowrap;-webkit-text-stroke:0.55px #111827;">Apr 23, 2020</div>
<div style="position:absolute;left:1591.40px;top:814.80px;font-size:18.16px;line-height:18.16px;font-weight:400;color:#111827;letter-spacing:0.796px;white-space:nowrap;-webkit-text-stroke:0.55px #111827;">Mar 18, 2024</div>
<div style="position:absolute;left:287.80px;top:947.40px;font-size:13.17px;line-height:13.17px;font-weight:400;color:#6b7280;letter-spacing:0.456px;white-space:nowrap;">Cert expires in 3 months</div>
<div style="position:absolute;left:170.60px;top:1013.90px;font-size:17.87px;line-height:17.87px;font-weight:400;color:#2152e4;letter-spacing:0.834px;white-space:nowrap;-webkit-text-stroke:0.55px #2152e4;">Obs: 0</div>
<div style="position:absolute;left:238.40px;top:1013.90px;font-size:17.87px;line-height:17.87px;font-weight:400;color:#2152e4;letter-spacing:1.020px;white-space:nowrap;-webkit-text-stroke:0.55px #2152e4;">Ins: 0</div>
<div style="position:absolute;left:710.85px;top:942.20px;font-size:13.45px;line-height:13.45px;font-weight:700;color:#ffffff;letter-spacing:0.000px;white-space:nowrap;">HT</div>
<div style="position:absolute;left:744.00px;top:940.10px;font-size:15.18px;line-height:15.18px;font-weight:400;color:#1f2937;letter-spacing:-0.105px;white-space:nowrap;">HTTPServer</div>
<div style="position:absolute;left:710.85px;top:985.20px;font-size:13.45px;line-height:13.45px;font-weight:700;color:#ffffff;letter-spacing:0.000px;white-space:nowrap;">AP</div>
<div style="position:absolute;left:745.00px;top:983.10px;font-size:15.18px;line-height:15.18px;font-weight:400;color:#1f2937;letter-spacing:0.036px;white-space:nowrap;">Apache</div>
<div style="position:absolute;left:850.80px;top:933.60px;font-size:18.26px;line-height:18.26px;font-weight:400;color:#1a50e0;letter-spacing:-0.300px;white-space:nowrap;-webkit-text-stroke:0.55px #1a50e0;transform:scaleX(0.9407);transform-origin:0.00px 0;">+1</div>
<div style="position:absolute;left:1153.80px;top:959.40px;font-size:19.22px;line-height:19.22px;font-weight:400;color:#1a9be8;letter-spacing:0.000px;white-space:nowrap;transform:scaleX(0.86);transform-origin:0 0;">F</div>
<div style="position:absolute;left:1296.30px;top:959.40px;font-size:19.22px;line-height:19.22px;font-weight:400;color:#1a9be8;letter-spacing:0.000px;white-space:nowrap;transform:scaleX(0.88);transform-origin:0 0;">B</div>
<div style="position:absolute;left:1433.40px;top:960.30px;font-size:18.16px;line-height:18.16px;font-weight:400;color:#111827;letter-spacing:1.125px;white-space:nowrap;-webkit-text-stroke:0.55px #111827;">Apr 22, 2020</div>
<div style="position:absolute;left:1591.40px;top:960.30px;font-size:18.16px;line-height:18.16px;font-weight:400;color:#111827;letter-spacing:0.687px;white-space:nowrap;-webkit-text-stroke:0.55px #111827;">Mar 17, 2024</div>
<div style="position:absolute;left:0px;top:1028px;width:1899px;height:52px;background:#e5e7eb"></div>
<div style="position:absolute;left:1899px;top:0px;width:1px;height:1080px;background:#fcfcfc"></div>
<div style="position:absolute;left:1900px;top:0px;width:20px;height:1080px;background:#f1f1f1"></div>
<div style="position:absolute;left:1901px;top:22px;width:18px;height:455px;background:#c1c1c1"></div>
<svg style="position:absolute;left:1900px;top:0px;" width="20" height="20" viewBox="0 0 20 20" fill="none"><path d="M5 13.6 L10 8.8 L15 13.6 Z" fill="#a3a3a3"/></svg>
<svg style="position:absolute;left:1900px;top:1060px;" width="20" height="20" viewBox="0 0 20 20" fill="none"><path d="M5 6.7 L10 11.7 L15 6.7 Z" fill="#505050"/></svg>
<div style="position:absolute;left:22.80px;top:1047.10px;font-size:16.63px;line-height:16.63px;font-weight:400;color:#111827;letter-spacing:0.193px;white-space:nowrap;">© 2019-2024. FireCompass</div>
</body></html>
